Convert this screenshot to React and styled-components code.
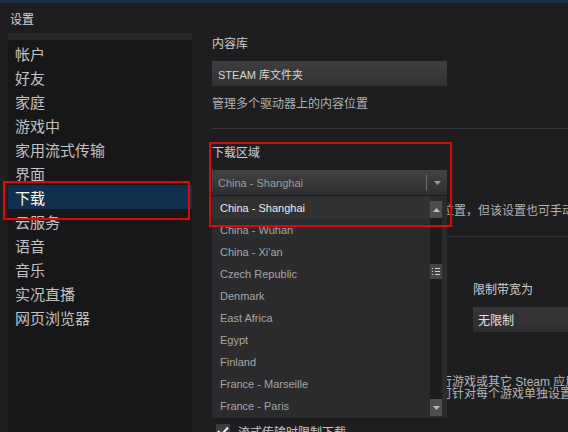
import styled, { createGlobalStyle } from 'styled-components'

const GlobalStyle = createGlobalStyle`
  html, body {
    margin: 0;
    padding: 0;
    background: #1e1e20;
  }
`

const Window = styled.div`
  position: relative;
  width: 568px;
  height: 432px;
  overflow: hidden;
  background: #1e1e20;
  display: flex;
  flex-direction: column;
  font-family: "Liberation Sans", "Noto Sans CJK SC", sans-serif;
`

const TitleBar = styled.div`
  flex-shrink: 0;
  height: 30px;
  border-top: 3px solid #1a2e45;
  padding-left: 10px;
  display: flex;
  align-items: center;
  font-size: 12px;
  color: #d2d2d2;
`

const Body = styled.div`
  flex: 1;
  display: flex;
  min-height: 0;
`

const Sidebar = styled.div`
  flex-shrink: 0;
  width: 184px;
  margin-left: 8px;
  padding-top: 1px;
  background: #171719;
  border-top: 7px solid #29292b;
`

const NavItem = styled.div`
  height: 24px;
  padding-left: 7px;
  display: flex;
  align-items: center;
  font-family: "Noto Sans CJK SC", sans-serif;
  font-size: 15px;
  color: ${p => (p.$active ? '#ffffff' : '#c2c2c2')};
  background: ${p => (p.$active ? '#11304f' : 'transparent')};
`

const Content = styled.div`
  flex: 1;
  min-width: 0;
  padding-left: 20px;
  display: flex;
  flex-direction: column;
  & > * {
    flex-shrink: 0;
  }
`

const Label = styled.div`
  margin-top: ${p => p.$mt || 0}px;
  height: 16px;
  line-height: 16px;
  font-size: 12px;
  color: #cfcfcf;
  white-space: nowrap;
`

const TextBox = styled.div`
  margin-top: 9px;
  width: 229px;
  height: 25px;
  padding-left: 6px;
  display: flex;
  align-items: center;
  background: linear-gradient(#3e3e40, #323234);
  font-size: 11px;
  color: #d6d6d6;
`

const Desc = styled.div`
  margin-top: ${p => p.$mt || 0}px;
  height: 16px;
  line-height: 16px;
  font-size: 12px;
  color: #b2b2b2;
  white-space: nowrap;
`

const Divider = styled.div`
  margin-top: ${p => p.$mt || 0}px;
  height: 1px;
  background: #38383a;
`

const DropdownWrap = styled.div`
  position: relative;
  margin-top: 9px;
  width: 235px;
  height: 25px;
`

const DropdownBox = styled.div`
  height: 100%;
  display: flex;
  align-items: center;
  background: linear-gradient(#434345, #2e2e30);
  font-size: 11px;
  color: #9c9c9c;
`

const DropdownValue = styled.div`
  flex: 1;
  padding-left: 6px;
`

const DropdownSep = styled.div`
  width: 1px;
  height: 16px;
  background: #707072;
`

const ArrowZone = styled.div`
  width: 20px;
  display: flex;
  justify-content: center;
  align-items: center;
`

const List = styled.div`
  position: absolute;
  top: 26px;
  left: 0;
  width: 235px;
  height: 222px;
  display: flex;
  background: #2b2b2d;
  z-index: 5;
`

const ListItems = styled.div`
  flex: 1;
  padding-top: 1px;
`

const ListItem = styled.div`
  height: 22px;
  padding-left: 8px;
  display: flex;
  align-items: center;
  font-size: 11px;
  color: ${p => (p.$current ? '#ececec' : '#a6a6a8')};
  background: ${p => (p.$current ? '#323234' : 'transparent')};
`

const ScrollBar = styled.div`
  width: 12px;
  margin: 5px 5px 2px 0;
  display: flex;
  flex-direction: column;
  background: #1d1d1f;
`

const ScrollBtn = styled.div`
  height: 17px;
  display: flex;
  justify-content: center;
  align-items: center;
  background: #4e4e50;
`

const Track = styled.div`
  flex: 1;
  padding-top: 46px;
`

const Thumb = styled.div`
  height: 15px;
  display: flex;
  justify-content: center;
  align-items: center;
  background: #444446;
`

const LowerGrid = styled.div`
  display: grid;
  grid-template-columns: 261px auto;
`

const RightCol = styled.div`
  display: flex;
  flex-direction: column;
`

const Select = styled.div`
  margin-top: 9px;
  width: 200px;
  height: 25px;
  padding-left: 5px;
  display: flex;
  align-items: center;
  background: linear-gradient(#363638, #2e2e30);
  font-size: 12px;
  color: #e4e4e4;
`

const CheckRow = styled.label`
  margin-top: ${p => p.$mt || 0}px;
  margin-left: 4px;
  height: 14px;
  display: flex;
  align-items: center;
  gap: 8px;
  font-size: 12px;
  color: #c8c8c8;
  white-space: nowrap;
`

const CheckBox = styled.span`
  flex-shrink: 0;
  width: 14px;
  height: 14px;
  display: flex;
  justify-content: center;
  align-items: center;
  background: #3c3c3e;
`

const Hint = styled.div`
  margin-top: 10px;
  padding-left: 24px;
  font-size: 12px;
  line-height: 12px;
  color: #b8b8b8;
  white-space: nowrap;
`

const RedBox = styled.div`
  position: absolute;
  left: ${p => p.$x}px;
  top: ${p => p.$y}px;
  width: ${p => p.$w}px;
  height: ${p => p.$h}px;
  box-sizing: border-box;
  border: 2px solid #e40606;
  z-index: 10;
  pointer-events: none;
`

const Tri = ({ up, color = '#bdbdbd' }) => (
  <svg width="7" height="4" viewBox="0 0 7 4">
    <path d={up ? 'M0 4 L3.5 0 L7 4 Z' : 'M0 0 L7 0 L3.5 4 Z'} fill={color} />
  </svg>
)

const Grip = () => (
  <svg width="8" height="9" viewBox="0 0 8 9">
    <g fill="#d0d0d0">
      <rect x="0" y="1" width="1" height="1" />
      <rect x="0" y="4" width="1" height="1" />
      <rect x="0" y="7" width="1" height="1" />
      <rect x="3" y="1" width="5" height="1" />
      <rect x="3" y="4" width="5" height="1" />
      <rect x="3" y="7" width="5" height="1" />
    </g>
  </svg>
)

const Check = () => (
  <svg width="12" height="10" viewBox="0 0 12 10">
    <path d="M1 5 L4.5 8.5 L11 1.5" stroke="#f2f2f2" strokeWidth="2" fill="none" />
  </svg>
)

const navItems = ['帐户', '好友', '家庭', '游戏中', '家用流式传输', '界面', '下载', '云服务', '语音', '音乐', '实况直播', '网页浏览器']

const regions = [
  'China - Shanghai',
  'China - Wuhan',
  "China - Xi'an",
  'Czech Republic',
  'Denmark',
  'East Africa',
  'Egypt',
  'Finland',
  'France - Marseille',
  'France - Paris',
]

export default function App() {
  return (
    <>
      <GlobalStyle />
      <Window>
        <TitleBar>设置</TitleBar>
        <Body>
          <Sidebar>
            {navItems.map(item => (
              <NavItem key={item} $active={item === '下载'}>{item}</NavItem>
            ))}
          </Sidebar>
          <Content>
            <Label $mt={3}>内容库</Label>
            <TextBox>STEAM 库文件夹</TextBox>
            <Desc $mt={10}>管理多个驱动器上的内容位置</Desc>
            <Divider $mt={16} />

            <Label $mt={16}>下载区域</Label>
            <DropdownWrap>
              <DropdownBox>
                <DropdownValue>China - Shanghai</DropdownValue>
                <DropdownSep />
                <ArrowZone><Tri color="#9a9a9a" /></ArrowZone>
              </DropdownBox>
              <List>
                <ListItems>
                  {regions.map((r, i) => (
                    <ListItem key={r} $current={i === 0}>{r}</ListItem>
                  ))}
                </ListItems>
                <ScrollBar>
                  <ScrollBtn><Tri up /></ScrollBtn>
                  <Track>
                    <Thumb><Grip /></Thumb>
                  </Track>
                  <ScrollBtn><Tri /></ScrollBtn>
                </ScrollBar>
              </List>
            </DropdownWrap>
            <Desc $mt={8}>Steam 会自动选择距离您最近的下载服务器位置，但该设置也可手动指定</Desc>
            <Divider $mt={17} />

            <LowerGrid>
              <div>
                <CheckRow $mt={52}>
                  <CheckBox />
                  限制下载速度
                </CheckRow>
              </div>
              <RightCol>
                <Label $mt={45}>限制带宽为</Label>
                <Select>无限制</Select>
              </RightCol>
            </LowerGrid>
            <CheckRow $mt={20}>
              <CheckBox><Check /></CheckBox>
              允许在游戏过程中下载
            </CheckRow>
            <Hint>
              若启用此选项，则当您在本机上正在运行游戏或其它 Steam 应用时仍会继续下载
              <br />
              下载速度可能会因此受到较大影响。也可针对每个游戏单独设置
            </Hint>
            <CheckRow $mt={24}>
              <CheckBox><Check /></CheckBox>
              流式传输时限制下载
            </CheckRow>
          </Content>
        </Body>
        <RedBox $x={3} $y={181} $w={187} $h={39} />
        <RedBox $x={209} $y={142} $w={243} $h={85} />
      </Window>
    </>
  )
}
